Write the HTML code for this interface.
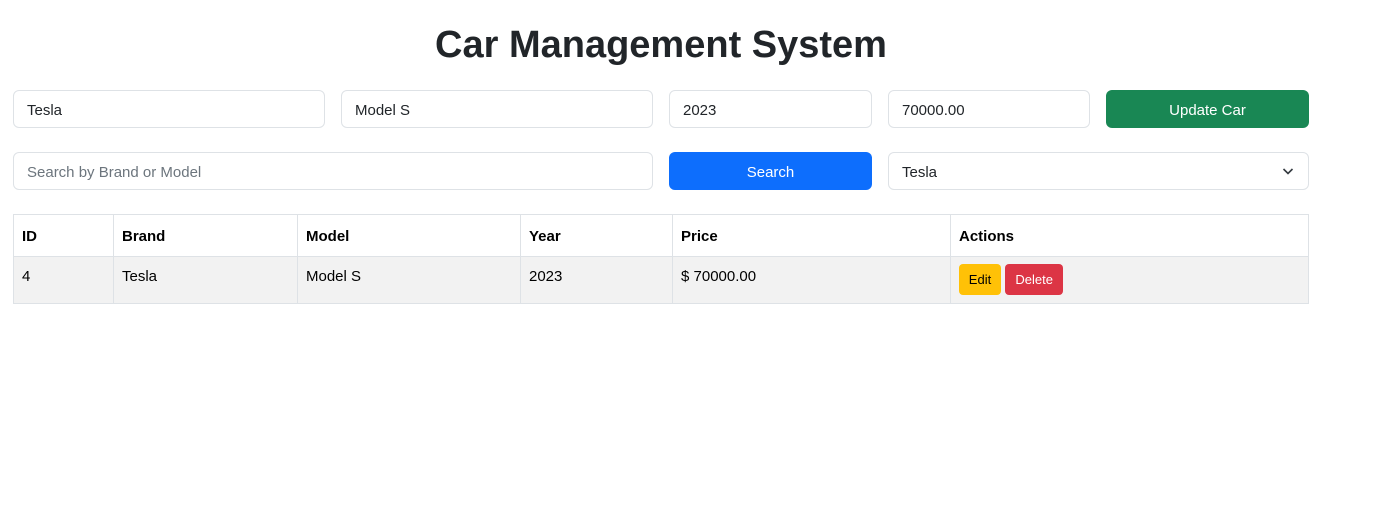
<!DOCTYPE html>
<html><head><meta charset="utf-8"><style>
*{box-sizing:border-box;margin:0;padding:0}
body{width:1376px;height:532px;background:#fff;font-family:"Liberation Sans",sans-serif;color:#212529;position:relative;overflow:hidden}
.a{position:absolute}
h1{position:absolute;left:0;width:1322px;top:20px;text-align:center;font-size:38px;font-weight:600;line-height:50px}
.in{position:absolute;height:38px;border:1px solid #dee2e6;border-radius:6px;font-size:15px;line-height:36px;padding-left:13px;padding-top:2px;background:#fff}
.btn{position:absolute;height:38px;border-radius:6px;color:#fff;font-size:15px;line-height:36px;padding-top:3px;text-align:center}
table{position:absolute;left:13px;top:214px;width:1296px;border-collapse:collapse;font-size:15px;color:#000}
td,th{border:1px solid #dee2e6;text-align:left;padding:0 8px;vertical-align:top}
th{height:41px;line-height:39px;padding-top:2px;font-weight:bold}
td{height:47px;line-height:40px;background:#f2f2f2}
.sb{display:inline-block;height:31px;line-height:31px;border-radius:4px;font-size:13px;margin-top:7px;vertical-align:top;text-align:center}
</style></head><body>
<h1>Car Management System</h1>
<div class="in" style="left:13px;top:90px;width:312px">Tesla</div>
<div class="in" style="left:341px;top:90px;width:312px">Model S</div>
<div class="in" style="left:669px;top:90px;width:203px">2023</div>
<div class="in" style="left:888px;top:90px;width:202px">70000.00</div>
<div class="btn" style="left:1106px;top:90px;width:203px;background:#198754">Update Car</div>
<div class="in" style="left:13px;top:152px;width:640px;color:#6c757d">Search by Brand or Model</div>
<div class="btn" style="left:669px;top:152px;width:203px;background:#0d6efd">Search</div>
<div class="in" style="left:888px;top:152px;width:421px">Tesla
<svg class="a" style="right:14px;top:13px" width="12" height="10" viewBox="0 0 12 10"><path d="M1.5 3l4.5 4.5 4.5-4.5" fill="none" stroke="#343a40" stroke-width="1.6"/></svg></div>
<table>
<tr><th style="width:100px">ID</th><th style="width:184px">Brand</th><th style="width:223px">Model</th><th style="width:152px">Year</th><th style="width:278px">Price</th><th>Actions</th></tr>
<tr><td>4</td><td>Tesla</td><td>Model S</td><td>2023</td><td>$ 70000.00</td><td><span class="sb" style="background:#ffc107;color:#000;width:42px">Edit</span> <span class="sb" style="background:#dc3545;color:#fff;width:58px">Delete</span></td></tr>
</table>
</body></html>
